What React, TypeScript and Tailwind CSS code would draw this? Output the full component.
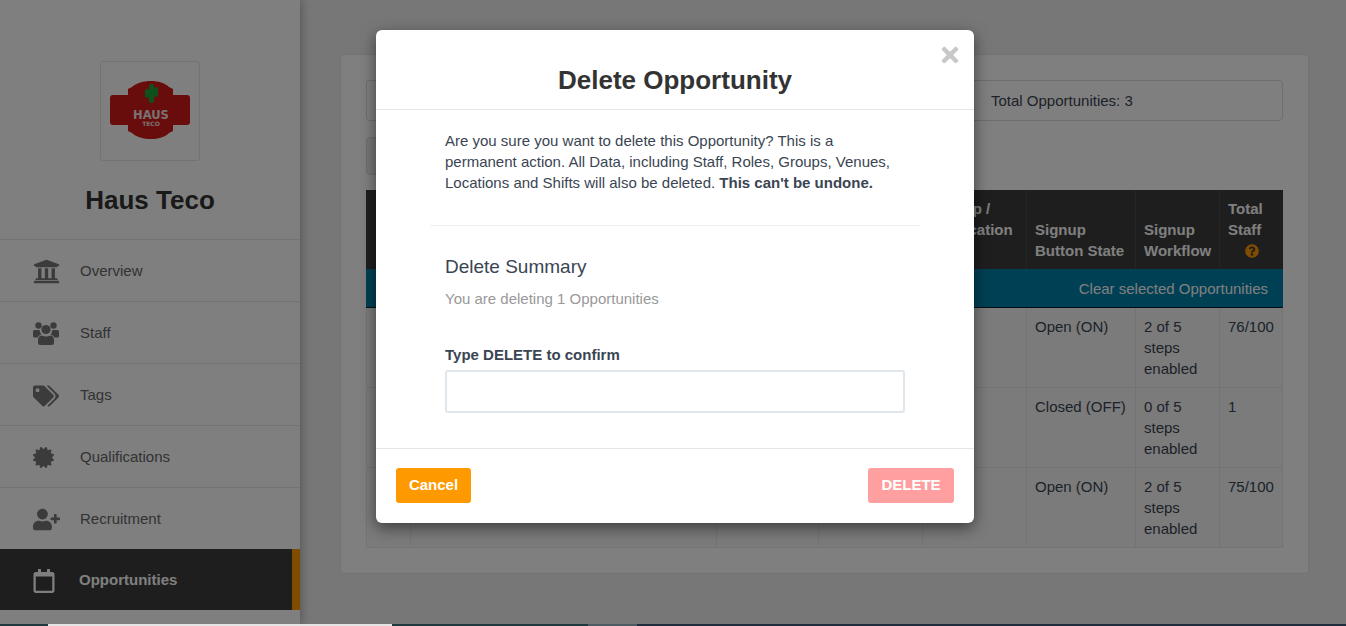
import { FaCertificate, FaQuestionCircle, FaRegCalendar, FaTags, FaTimes, FaUniversity, FaUserPlus } from 'react-icons/fa';

function StaffIcon({ size }: { size: number }) {
  return (
    <svg viewBox="0 0 26 23" width={size} height={(size * 23) / 26} fill="currentColor">
      <circle cx="5.5" cy="3.5" r="3.2" />
      <circle cx="20.5" cy="3.5" r="3.2" />
      <circle cx="13" cy="7.5" r="4.6" />
      <path d="M1.5 8 H6.5 Q7 11 8.5 12.5 Q6 13 4.5 15.5 H1.5 Q0 15.5 0 14 V9.5 Q0 8 1.5 8 Z" />
      <path d="M24.5 8 H19.5 Q19 11 17.5 12.5 Q20 13 21.5 15.5 H24.5 Q26 15.5 26 14 V9.5 Q26 8 24.5 8 Z" />
      <path d="M8.5 13.5 Q13 15.5 17.5 13.5 Q21 14 21 18 V20.5 Q21 23 18.5 23 H7.5 Q5 23 5 20.5 V18 Q5 14 8.5 13.5 Z" />
    </svg>
  );
}

const navItems = [
  { label: 'Overview', icon: FaUniversity, size: 27 },
  { label: 'Staff', icon: StaffIcon, size: 26 },
  { label: 'Tags', icon: FaTags, size: 26 },
  { label: 'Qualifications', icon: FaCertificate, size: 21 },
  { label: 'Recruitment', icon: FaUserPlus, size: 27 },
];

const rows = [
  { state: 'Open (ON)', workflow: '2 of 5 steps enabled', total: '76/100' },
  { state: 'Closed (OFF)', workflow: '0 of 5 steps enabled', total: '1' },
  { state: 'Open (ON)', workflow: '2 of 5 steps enabled', total: '75/100' },
];

const footerStrip = [
  { width: 'w-[48px]', color: 'bg-[#1f3a3f]' },
  { width: 'w-[344px]', color: 'bg-[#e4e4e4]' },
  { width: 'w-[196px]', color: 'bg-[#1f3a3f]' },
  { width: 'w-[49px]', color: 'bg-[#4c5c62]' },
  { width: 'flex-1', color: 'bg-[#1f2d3d]' },
];

function Logo() {
  return (
    <svg viewBox="0 0 98 98" className="w-[98px] h-[98px]">
      <path
        d="M12 33 H27 V27 L31 25 C40 17 60 17 68 25 L72 27 V33 H86 Q89 33 89 36 V60 Q89 63 86 63 H72 V69 L68 71 C60 79 40 79 31 71 L27 69 V63 H12 Q9 63 9 60 V36 Q9 33 12 33 Z"
        fill="#d01818"
      />
      <rect x="48" y="22" width="5" height="19" rx="2" fill="#1ea33c" />
      <rect x="44" y="27" width="4" height="9" rx="2" fill="#1ea33c" />
      <rect x="53" y="25" width="4" height="10" rx="2" fill="#1ea33c" />
      <text x="50" y="57" textAnchor="middle" fontFamily="'DejaVu Sans', sans-serif" fontWeight="700" fontSize="11.5" fill="#f2e4e4">
        HAUS
      </text>
      <text x="50" y="64" textAnchor="middle" fontFamily="'DejaVu Sans', sans-serif" fontWeight="700" fontSize="6" fill="#f2e4e4">
        TECO
      </text>
    </svg>
  );
}

function Sidebar() {
  return (
    <aside className="w-[300px] shrink-0 bg-white shadow-[2px_0_8px_rgba(0,0,0,0.25)] z-10">
      <div className="pt-[61px] flex justify-center">
        <div className="w-[100px] h-[100px] border border-[#e6e6e6] rounded-[3px] flex items-center justify-center">
          <Logo />
        </div>
      </div>
      <h1 className="h-[78px] flex items-center justify-center text-[26px] font-bold text-[#333]">Haus Teco</h1>
      <nav>
        {navItems.map(({ label, icon: Icon, size }) => (
          <div key={label} className="h-[62px] pt-[2px] border-t border-[#e6e6e6] flex items-center text-[15px] text-[#666]">
            <span className="w-[80px] pl-[33px] text-[#777]">
              <Icon size={size} />
            </span>
            {label}
          </div>
        ))}
        <div className="h-[61px] pt-[2px] bg-[#3c3c3c] border-r-8 border-[#ff9900] flex items-center text-[15px] font-bold text-white">
          <span className="w-[79px] pl-[32px]">
            <FaRegCalendar size={24} />
          </span>
          Opportunities
        </div>
      </nav>
    </aside>
  );
}

const headCell = 'p-2 border-r border-[#4a4a4a]';
const bodyCell = 'p-2 border-r border-b border-[#e8e8e8]';

function OpportunitiesTable() {
  return (
    <table className="w-[917px] table-fixed border-separate border-spacing-0 text-[15px] leading-[21px] text-[#3a4553]">
      <colgroup>
        <col className="w-[45px]" />
        <col className="w-[306px]" />
        <col className="w-[102px]" />
        <col className="w-[104px]" />
        <col className="w-[104px]" />
        <col className="w-[109px]" />
        <col className="w-[84px]" />
        <col className="w-[63px]" />
      </colgroup>
      <thead>
        <tr className="bg-[#3c3c3c] text-white text-left align-bottom">
          <th className={headCell} />
          <th className={headCell} />
          <th className={headCell} />
          <th className={headCell} />
          <th className={headCell}>Signup / Application Portal</th>
          <th className={headCell}>Signup Button State</th>
          <th className={headCell}>Signup Workflow</th>
          <th className="p-2">
            Total Staff
            <span className="flex justify-center h-[21px] items-center">
              <FaQuestionCircle size={14} className="text-[#ff9900]" />
            </span>
          </th>
        </tr>
      </thead>
      <tbody>
        <tr className="bg-[#0080a8] text-white">
          <td colSpan={8} className="h-[39px] px-[15px] text-right border-b border-[#00202c]">
            Clear selected Opportunities
          </td>
        </tr>
        {rows.map((row, i) => (
          <tr key={i} className="align-top bg-[#f6f6f6]">
            <td className={`${bodyCell} border-l`} />
            <td className={bodyCell} />
            <td className={bodyCell} />
            <td className={bodyCell} />
            <td className={bodyCell} />
            <td className={`${bodyCell} whitespace-nowrap`}>{row.state}</td>
            <td className={bodyCell}>{row.workflow}</td>
            <td className={bodyCell}>{row.total}</td>
          </tr>
        ))}
      </tbody>
    </table>
  );
}

function DeleteModal() {
  return (
    <div className="absolute inset-0 z-20 bg-black/50 pl-[376px] pt-[30px]">
      <div className="relative w-[598px] h-[493px] bg-white rounded-md shadow-[0_5px_15px_rgba(0,0,0,0.5)] text-[#3a4553]">
        <FaTimes size={24} className="absolute top-[13px] right-[12px] text-[#c8c8c8]" />
        <div className="h-[80px] pt-[33px] border-b border-[#e5e5e5]">
          <h2 className="text-center text-[26px] leading-[34px] font-bold text-[#333]">Delete Opportunity</h2>
        </div>
        <div className="pt-[20px]">
          <p className="ml-[69px] w-[450px] text-[15px] leading-[21px]">
            Are you sure you want to delete this Opportunity? This is a permanent action. All Data, including Staff, Roles, Groups, Venues, Locations and Shifts will also be deleted.{' '}
            <strong className="font-bold">This can't be undone.</strong>
          </p>
          <div className="ml-[54px] w-[490px] mt-[32px] border-t border-[#eee]" />
          <div className="ml-[69px] w-[460px]">
            <h3 className="mt-[28px] text-[19px] leading-[26px]">Delete Summary</h3>
            <p className="mt-[8px] text-[15px] leading-[21px] text-[#999]">You are deleting 1 Opportunities</p>
            <label className="block mt-[35px] text-[15px] leading-[21px] font-bold">Type DELETE to confirm</label>
            <input className="block mt-[5px] w-full h-[43px] border-2 border-[#dfe7ec] rounded-[3px] outline-none" />
          </div>
        </div>
        <div className="mt-[35px] border-t border-[#e5e5e5] pt-[19px] px-[20px] flex justify-between">
          <button className="w-[75px] h-[35px] rounded-[3px] bg-[#ff9900] text-white text-[15px] font-bold">Cancel</button>
          <button className="w-[86px] h-[35px] rounded-[3px] bg-[#ff9f9f] text-white text-[15px] font-bold">DELETE</button>
        </div>
      </div>
    </div>
  );
}

export default function App() {
  return (
    <div className="h-[626px] overflow-hidden font-['Liberation_Sans',Arial,sans-serif]">
      <div className="relative h-[624px] overflow-hidden flex bg-[#eee]">
        <Sidebar />
        <main className="flex-1">
          <section className="mt-[54px] ml-[40px] w-[969px] h-[520px] p-[25px] bg-white border border-[#e4e4e4] rounded-[4px]">
            <div className="h-[41px] pt-[2px] border border-[#ddd] rounded-[4px] flex items-center pl-[624px] text-[15px] text-[#3a4553]">
              Total Opportunities: 3
            </div>
            <div className="mt-[16px] w-[120px] h-[38px] bg-[#eee] border border-[#ddd] rounded-[4px]" />
            <div className="mt-[15px]">
              <OpportunitiesTable />
            </div>
          </section>
        </main>
        <DeleteModal />
      </div>
      <div className="h-[2px] flex">
        {footerStrip.map((part, i) => (
          <div key={i} className={`${part.width} ${part.color}`} />
        ))}
      </div>
    </div>
  );
}
